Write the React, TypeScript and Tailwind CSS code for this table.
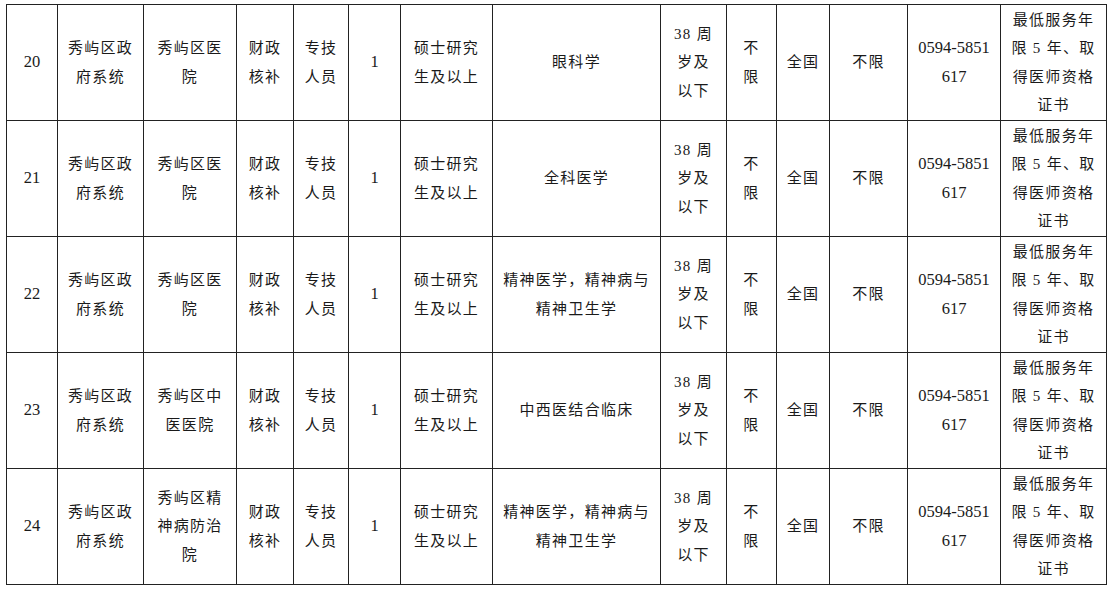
const widths = [51, 86, 93, 57, 55, 52, 92, 168, 66, 50, 53, 78, 93, 106];

type Row = {
  no: string;
  sys: string[];
  unit: string[];
  major: string[];
};

const rows: Row[] = [
  { no: '20', sys: ['秀屿区政', '府系统'], unit: ['秀屿区医', '院'], major: ['眼科学'] },
  { no: '21', sys: ['秀屿区政', '府系统'], unit: ['秀屿区医', '院'], major: ['全科医学'] },
  { no: '22', sys: ['秀屿区政', '府系统'], unit: ['秀屿区医', '院'], major: ['精神医学，精神病与', '精神卫生学'] },
  { no: '23', sys: ['秀屿区政', '府系统'], unit: ['秀屿区中', '医医院'], major: ['中西医结合临床'] },
  { no: '24', sys: ['秀屿区政', '府系统'], unit: ['秀屿区精', '神病防治', '院'], major: ['精神医学，精神病与', '精神卫生学'] },
];

function Lines({ lines, spaced = true }: { lines: string[]; spaced?: boolean }) {
  return (
    <div className={spaced ? 'tracking-[1.3px]' : ''}>
      {lines.map((l, i) => (
        <div key={i} className="whitespace-nowrap">{l}</div>
      ))}
    </div>
  );
}

const cell = 'border border-[#222] text-center align-middle p-0';

export default function App() {
  return (
    <div
      className="w-[1111px] h-[589px] bg-white pt-[4px] pl-[6px] text-[#1a1a1a] text-[15px] leading-[28.5px]"
      style={{ fontFamily: "'Liberation Serif', 'Noto Sans CJK SC', serif" }}
    >
      <table className="table-fixed border-collapse w-[1100px]">
        <colgroup>
          {widths.map((w, i) => (
            <col key={i} style={{ width: w }} />
          ))}
        </colgroup>
        <tbody>
          {rows.map((r) => (
            <tr key={r.no} className="h-[116px]">
              <td className={cell}><span className="text-[16.5px]">{r.no}</span></td>
              <td className={cell}><Lines lines={r.sys} /></td>
              <td className={cell}><Lines lines={r.unit} /></td>
              <td className={cell}><Lines lines={['财政', '核补']} /></td>
              <td className={cell}><Lines lines={['专技', '人员']} /></td>
              <td className={cell}><span className="text-[16.5px]">1</span></td>
              <td className={cell}><Lines lines={['硕士研究', '生及以上']} /></td>
              <td className={cell}><Lines lines={r.major} /></td>
              <td className={cell}><Lines lines={['38 周', '岁及', '以下']} /></td>
              <td className={cell}><Lines lines={['不', '限']} /></td>
              <td className={cell}><Lines lines={['全国']} /></td>
              <td className={cell}><Lines lines={['不限']} /></td>
              <td className={cell}>
                <div className="text-[16.5px]">
                  <div>0594-5851</div>
                  <div>617</div>
                </div>
              </td>
              <td className={cell}><Lines lines={['最低服务年', '限 5 年、取', '得医师资格', '证书']} /></td>
            </tr>
          ))}
        </tbody>
      </table>
    </div>
  );
}
